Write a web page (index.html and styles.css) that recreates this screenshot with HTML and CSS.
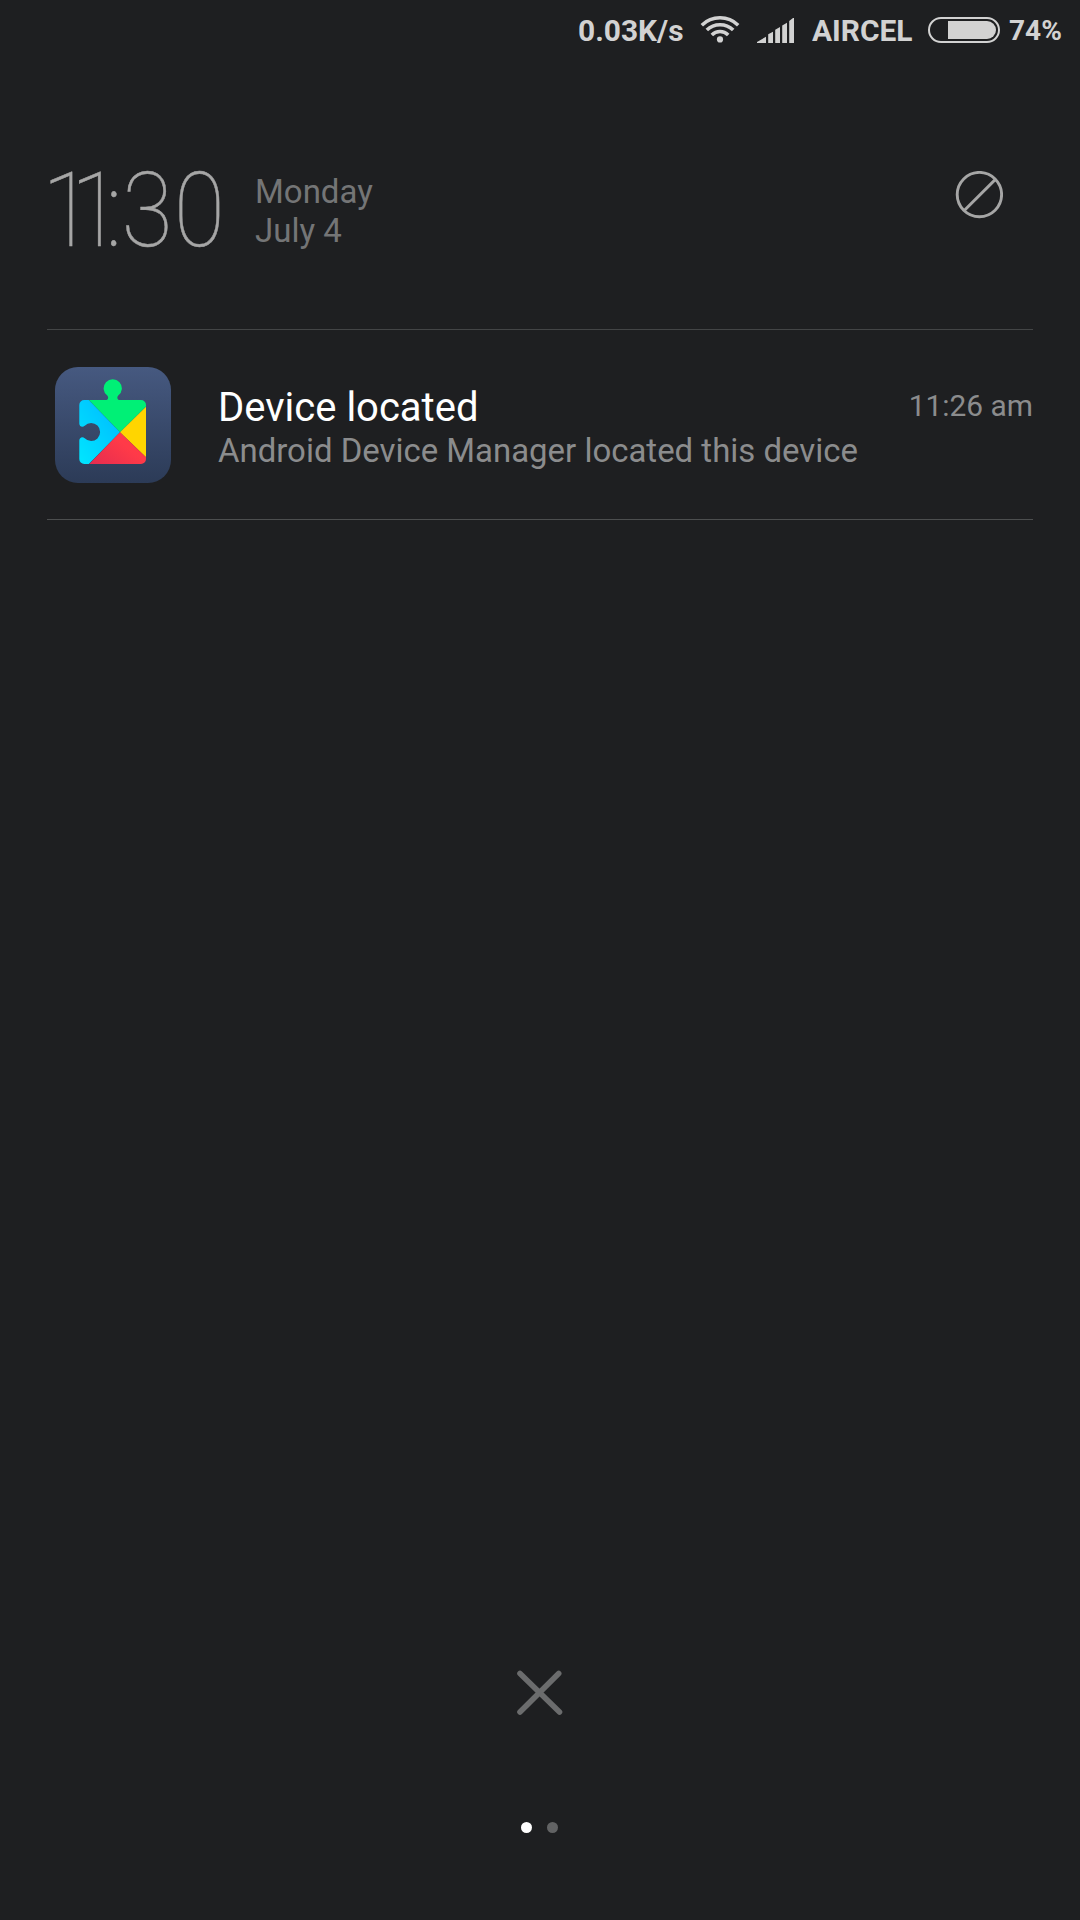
FILE: index.html
```html
<!DOCTYPE html>
<html lang="en">
<head>
<meta charset="utf-8">
<title>Notifications</title>
<link rel="stylesheet" href="styles.css">
</head>
<body>
<main class="shade">
  <header class="status">
    <span class="net">0.03K/s</span>
    <svg class="wifi" width="40" height="28" viewBox="0 0 40 28" fill="none" stroke="#d2d2d2" stroke-width="3.5">
      <path d="M1.8 10.2a26.2 26.2 0 0 1 36.4 0M6.8 15.1a18.8 18.8 0 0 1 26.4 0M11.8 19.9a11.6 11.6 0 0 1 16.4 0"/>
      <circle cx="20" cy="24.4" r="3.1" fill="#d2d2d2" stroke="none"/>
    </svg>
    <svg class="signal" width="38" height="26" viewBox="0 0 38 26" fill="#d2d2d2">
      <path d="M0 25V24L9 18.7V25ZM11.2 25V16.3L16 13.8V25ZM18.2 25V11.7L23 9V25ZM25.2 25V7.4L30 4.7V25ZM32.2 25V3L36 0H37V25Z"/>
    </svg>
    <span class="carrier">AIRCEL</span>
    <span class="battery"><span class="charge" style="width: 48px"></span></span>
    <span class="percent">74%</span>
  </header>

  <section class="head">
    <svg class="clock" width="208" height="77">
      <text transform="scale(.9 1)" x="-5.4 26.5 65.2 83 141.2" y="75">11:30</text>
    </svg>
    <div class="date">Monday<br>July 4</div>
    <svg class="block" width="48" height="48" viewBox="0 0 48 48" fill="none" stroke="#a6a6a6" stroke-width="2.9">
      <circle cx="24.4" cy="23.6" r="22.2"/>
      <path d="M9 39.8L40.2 8.6"/>
    </svg>
  </section>

  <article class="notice">
    <svg class="app" width="116" height="116" viewBox="0 0 116 116">
      <defs>
        <linearGradient id="tile" x2="0" y2="1"><stop stop-color="#465980"/><stop offset="1" stop-color="#2c3b57"/></linearGradient>
        <linearGradient id="blue" x1="1" y1="0" x2=".3" y2="1"><stop stop-color="#00b4ff"/><stop offset="1" stop-color="#00e4ff"/></linearGradient>
        <linearGradient id="red" x1="0" y1="1" x2="1" y2=".3"><stop stop-color="#e42c50"/><stop offset=".7" stop-color="#ff3a48"/></linearGradient>
        <clipPath id="puzzle">
          <path d="M29.3 33H50.5C53 33 54 30.5 52.3 28.6A9.1 9.1 0 1 1 63.2 28.6C61.5 30.5 62.5 33 65 33H86A5 5 0 0 1 91 38V92A5 5 0 0 1 86 97H29.3A5 5 0 0 1 24.3 92V73.5C24.3 70.5 27.5 69 29.7 71.3A9 9 0 1 0 29.7 58.7C27.5 61 24.3 59.5 24.3 56.5V38A5 5 0 0 1 29.3 33Z"/>
        </clipPath>
      </defs>
      <rect width="116" height="116" rx="23" fill="url(#tile)"/>
      <g clip-path="url(#puzzle)">
        <path fill="#00f076" d="M2 0H131L65 65.3Z"/>
        <path fill="url(#blue)" d="M24 23L65 65.3L24 107Z"/>
        <path fill="#ffd500" d="M91 39.7L65 65.3L91 90.3Z"/>
        <path fill="url(#red)" d="M34.3 97L65 65.3L91 90.3V97Z"/>
      </g>
    </svg>
    <div class="body">
      <div class="row"><h1 class="title">Device located</h1><time class="time">11:26 am</time></div>
      <p class="text">Android Device Manager located this device</p>
    </div>
  </article>

  <footer class="foot">
    <svg class="clear" width="48" height="48" viewBox="0 0 48 48" stroke="#6b6c6d" stroke-width="5.6" stroke-linecap="round">
      <path d="M4 4.5L43.5 43M42.7 4.5L4 43"/>
    </svg>
    <div class="pages"><span class="dot current"></span><span class="dot"></span></div>
  </footer>
</main>
</body>
</html>
```
FILE: styles.css
```css
* { box-sizing: border-box; margin: 0; padding: 0; }
body { background: #1e1f21; font-family: Roboto, sans-serif; }
.shade { width: 1080px; height: 1920px; display: flex; flex-direction: column; overflow: hidden; }
svg { display: block; flex: none; }

.status { height: 62px; display: flex; align-items: flex-start; padding-left: 578px; color: #d2d2d2; font-size: 29.9px; font-weight: 700; line-height: 62px; white-space: nowrap; }
.net { width: 122px; }
.wifi { margin: 15px 17px 0 0; }
.signal { margin: 18px 17px 0 0; }
.carrier { width: 116px; }
.battery { width: 72px; height: 26px; margin: 17px 9px 0 0; padding: 2px; border: 2px solid #d2d2d2; border-radius: 13px; display: flex; justify-content: flex-end; }
.charge { background: #d2d2d2; border-radius: 0 9px 9px 0; }
.percent { font-size: 28px; line-height: 61px; }

.head { height: 268px; margin: 0 47px; padding-top: 109px; border-bottom: 1px solid #434546; display: flex; align-items: flex-start; }
.clock { width: 208px; overflow: visible; fill: #a6a6a6; stroke: #a6a6a6; stroke-width: .5px; font-size: 103px; font-weight: 100; }
.date { padding-top: 1px; color: #747576; font-size: 33px; line-height: 39px; }
.block { margin: 0 30px 0 auto; }

.notice { height: 190px; margin: 0 47px; padding: 37px 0 0 8px; border-bottom: 1px solid #4c4e4f; display: flex; }
.body { flex: 1; padding: 15px 0 0 47px; }
.row { display: flex; justify-content: space-between; height: 50px; }
.title { color: #fff; font-size: 40px; font-weight: 400; line-height: 52px; white-space: nowrap; }
.time { color: #8b8c8d; font-size: 29.9px; line-height: 48px; }
.text { color: #8b8c8d; font-size: 32.95px; line-height: 38px; white-space: nowrap; }

.foot { margin-top: auto; height: 251px; display: flex; flex-direction: column; align-items: center; }
.clear { margin-right: 1px; }
.pages { display: flex; gap: 15px; margin: 105px 2px 0 0; }
.dot { width: 11px; height: 11px; border-radius: 50%; background: #626364; }
.current { background: #fff; }
```
